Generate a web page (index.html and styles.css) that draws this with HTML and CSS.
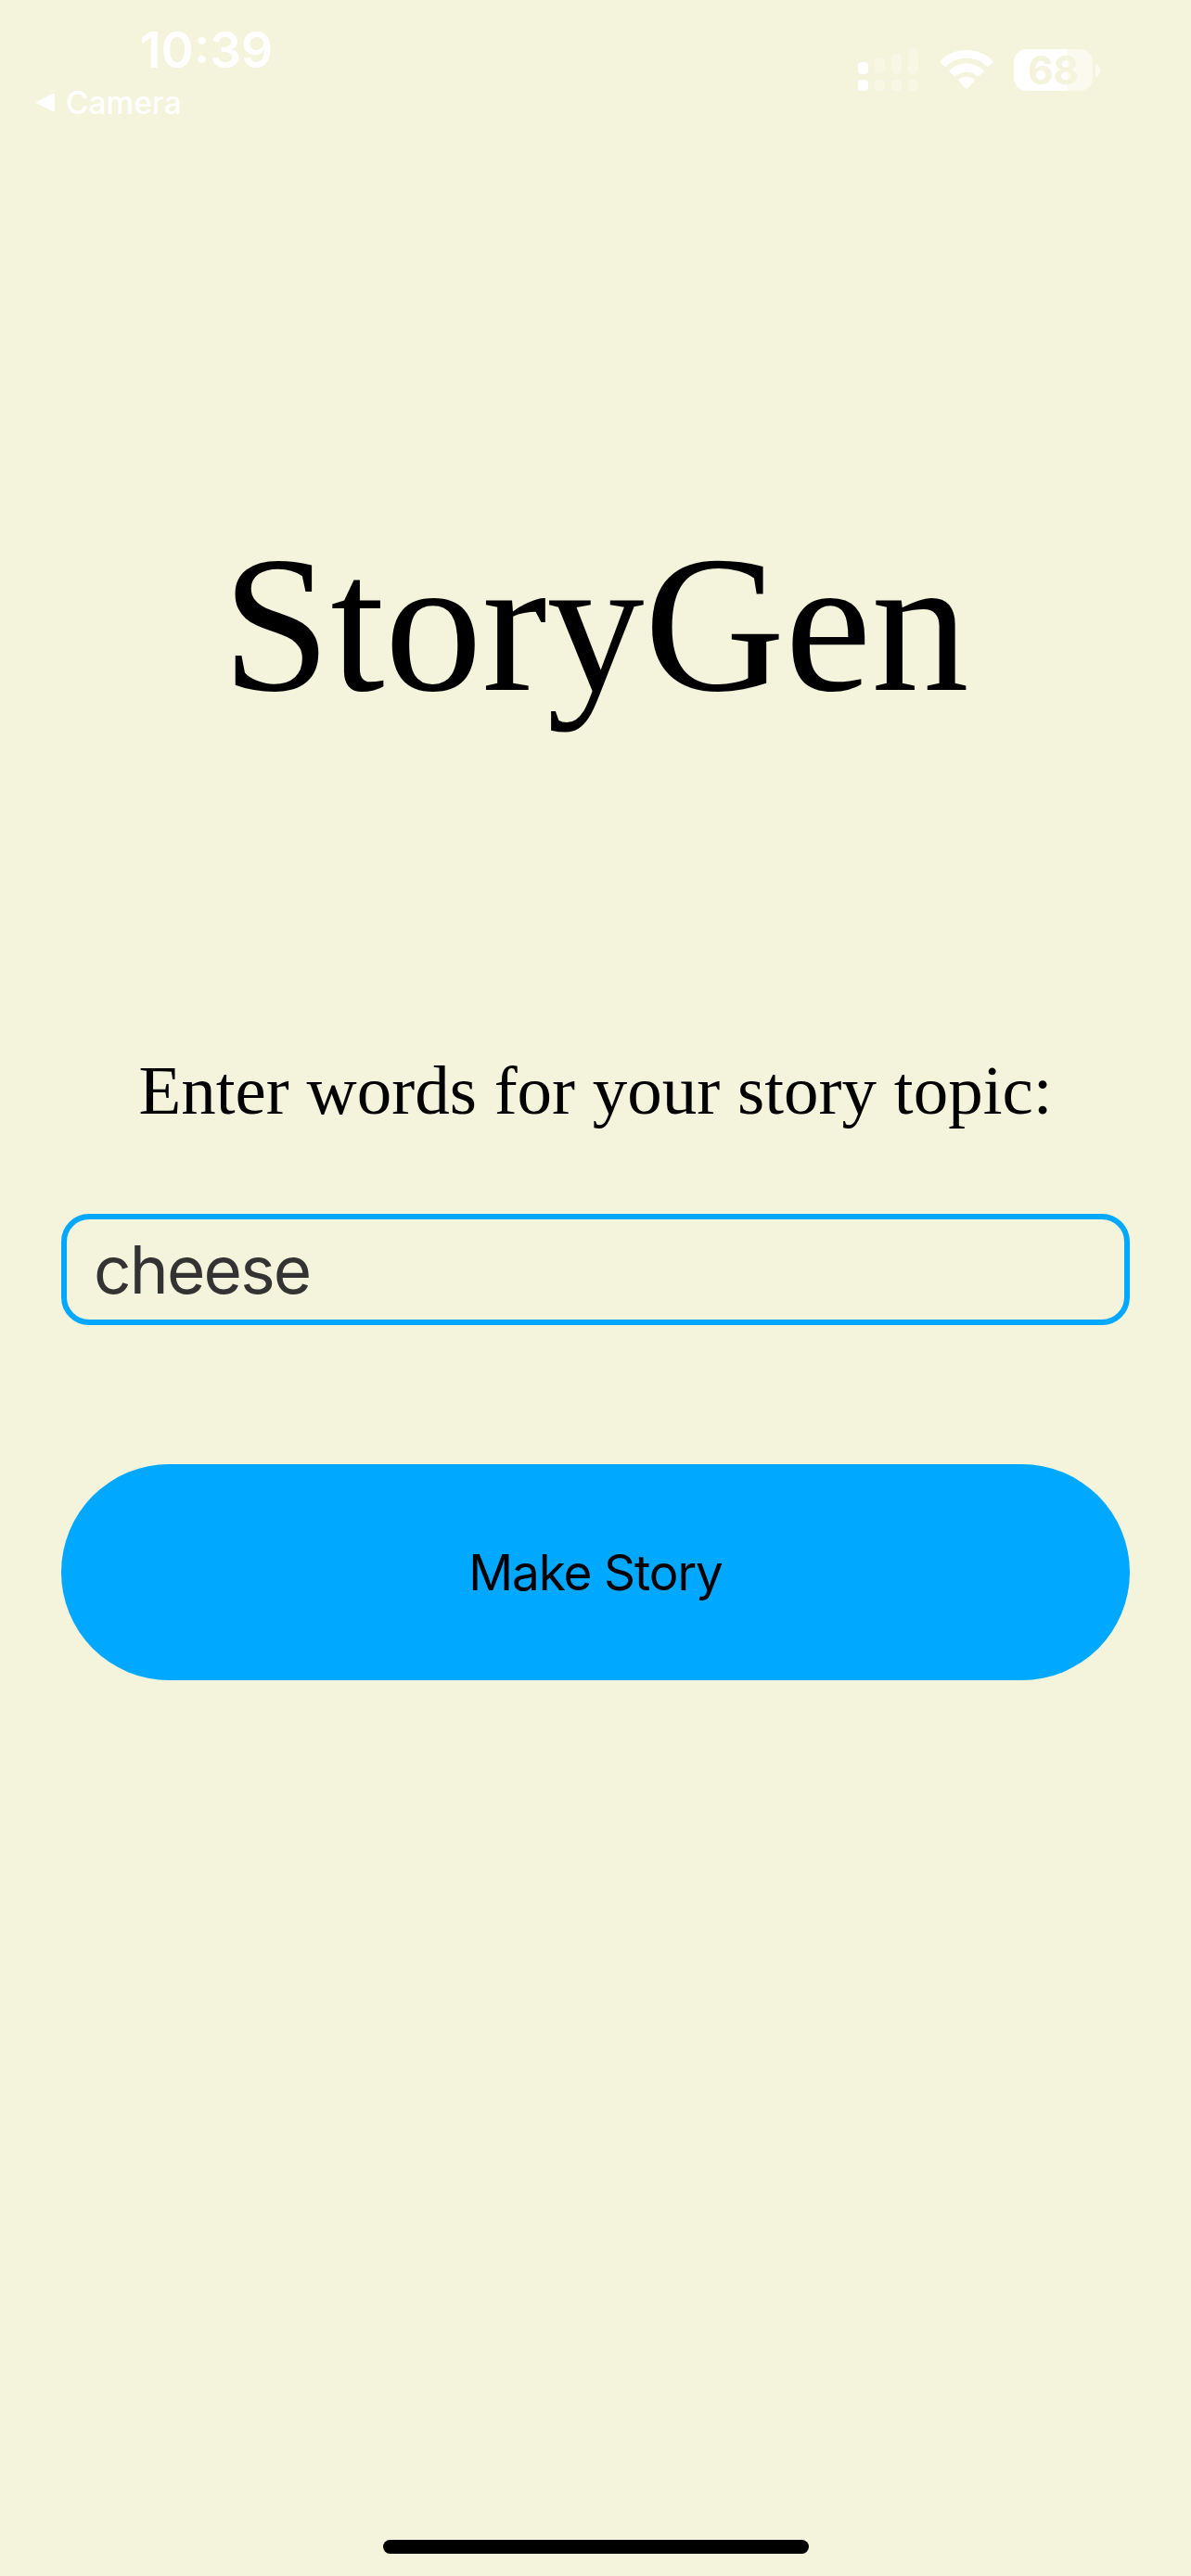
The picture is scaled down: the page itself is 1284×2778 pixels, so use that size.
FILE: index.html
```html
<!DOCTYPE html>
<html lang="en">
<head>
<meta charset="utf-8">
<title>StoryGen</title>
<link rel="stylesheet" href="styles.css">
</head>
<body>
<header class="status">
  <div class="status-left">
    <div class="time">10:39</div>
    <div class="back">
      <svg class="back-arrow" width="22" height="22" viewBox="0 0 22 22"><path d="M2 9.3 18.500 1Q21 0 21 2.500V18.500Q21 21 18.500 20L2 11.800Q0 10.500 2 9.300Z" fill="#fff"/></svg>
      <span class="back-label">Camera</span>
    </div>
  </div>
  <div class="status-right">
    <svg class="signal" width="66" height="46" viewBox="0 0 66 46" fill="#fff">
      <rect x="0" y="15" width="11" height="13" rx="4"/>
      <rect x="0" y="34" width="11" height="12" rx="4"/>
      <g opacity=".28">
        <rect x="18" y="10.500" width="11" height="17.500" rx="5"/>
        <rect x="36" y="5.500" width="11" height="22.500" rx="5"/>
        <rect x="54" y="0" width="11" height="28" rx="5"/>
        <rect x="18" y="34" width="11" height="12" rx="4"/>
        <rect x="36" y="34" width="11" height="12" rx="4"/>
        <rect x="54" y="34" width="11" height="12" rx="4"/>
      </g>
    </svg>
    <svg class="wifi" width="58" height="43" viewBox="0 0 58 43" fill="#fff">
      <path d="M1 11.200C16-3.600 42-3.600 57 11.200Q58.200 12.500 57 13.700L53 17.300Q51.800 18.300 50.600 17.200C38.500 6 19.500 6 7.400 17.200Q6.200 18.300 5 17.300L1 13.700Q-.2 12.500 1 11.200Z"/>
      <path d="M10.700 21.500C21 12 37 12 47.300 21.500Q48.300 22.500 47.300 23.600L42.500 28Q41.500 28.900 40.300 28C34 22.300 24 22.300 17.700 28Q16.500 28.900 15.500 28L10.700 23.600Q9.700 22.500 10.700 21.500Z"/>
      <path d="M20.700 31.500C25.500 27.700 32.500 27.700 37.300 31.500Q38.200 32.400 37.300 33.400L30 41.300Q29 42.300 28 41.300L20.700 33.400Q19.800 32.400 20.700 31.500Z"/>
    </svg>
    <div class="battery">
      <div class="battery-body">68</div>
      <svg class="battery-cap" width="5" height="14" viewBox="0 0 5 14"><path d="M0 0Q5 2 5 7T0 14Z" fill="#fff" opacity=".62"/></svg>
    </div>
  </div>
</header>
<main class="content">
  <h1 class="title">StoryGen</h1>
  <label class="prompt" for="topic">Enter words for your story topic:</label>
  <input class="topic" id="topic" type="text" value="cheese">
  <button class="make" type="button">Make Story</button>
</main>
<div class="home-bar"></div>
</body>
</html>
```
FILE: styles.css
```css
* { box-sizing: border-box; }
body {
  margin: 0;
  height: 2778px;
  display: flex;
  flex-direction: column;
  background: #f4f4dc;
  color: #000;
  font-family: Inter, "Liberation Sans", sans-serif;
  overflow: hidden;
}
.status {
  height: 150px;
  display: flex;
  justify-content: space-between;
  padding: 23px 98px 0 38px;
  color: #fff;
}
.time {
  padding: 1px 0 0 113px;
  font-size: 53.5px;
  line-height: 60px;
  font-weight: 600;
}
.back {
  display: flex;
  align-items: center;
  gap: 11px;
  margin-top: 7px;
}
.back-label {
  font-size: 33.5px;
  line-height: 40px;
  font-weight: 500;
}
.status-right {
  display: flex;
  align-items: flex-start;
  padding-top: 29px;
}
.signal { margin-right: 22px; }
.wifi { margin: 2px 22px 0 0; }
.battery {
  display: flex;
  align-items: center;
  gap: 3px;
  margin-top: 1px;
}
.battery-body {
  width: 85px;
  height: 45px;
  border-radius: 14px;
  background: linear-gradient(to right, #fff 58px, #fafaee 58px);
  color: #f4f4dc;
  font-size: 42px;
  line-height: 45px;
  font-weight: 700;
  text-align: center;
}
.content {
  flex: 1;
  display: flex;
  flex-direction: column;
  padding: 403px 66px 0;
}
.title {
  margin: 0;
  font: 400 210px/240px "Liberation Serif", serif;
  text-align: center;
}
.prompt {
  margin-top: 338px;
  font: 75px/90px "Liberation Serif", serif;
  text-align: center;
}
.topic {
  height: 120px;
  margin-top: 88px;
  padding: 0 29px;
  border: 6px solid #00a8ff;
  border-radius: 30px;
  background: transparent;
  color: #333;
  font-family: inherit;
  font-size: 71px;
  letter-spacing: -1.8px;
}
.make {
  height: 233px;
  margin-top: 150px;
  border: 0;
  border-radius: 117px;
  background: #00a8ff;
  color: #000;
  font-family: inherit;
  font-size: 53px;
  letter-spacing: -1.1px;
}
.home-bar {
  width: 459px;
  height: 15px;
  margin: 0 auto 24px;
  border-radius: 8px;
  background: #000;
}
```
